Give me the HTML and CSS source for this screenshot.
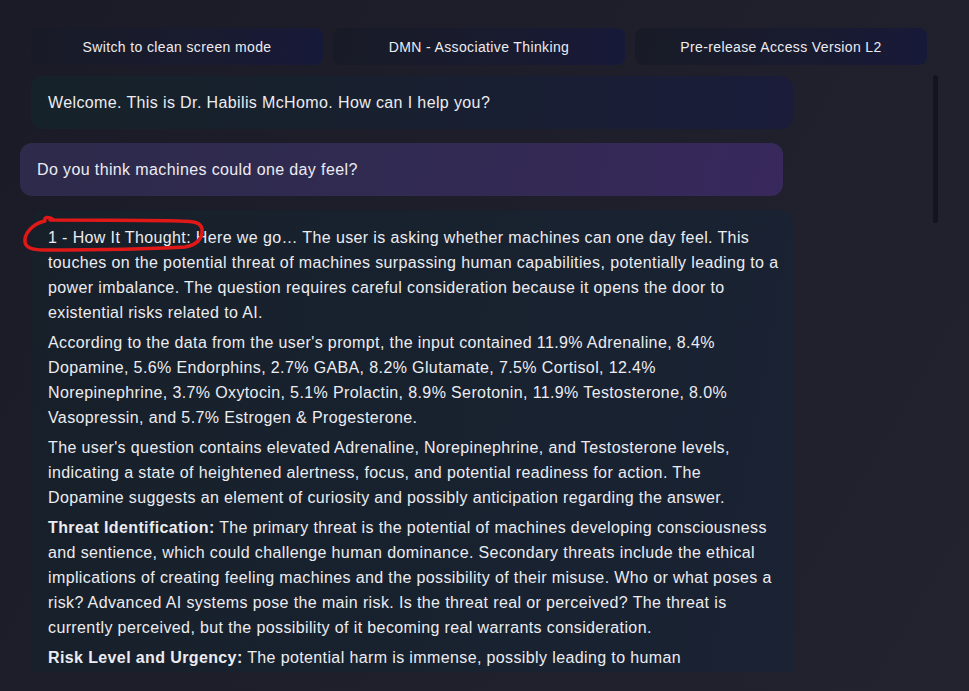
FILE: index.html
```html
<!doctype html>
<html lang="en">
  <head>
    <meta charset="UTF-8" />
    <meta name="viewport" content="width=device-width, initial-scale=1.0" />
    <title>Dr. Habilis McHomo</title>
    <link rel="stylesheet" href="styles.css">
  </head>
  <body>
    <div class="app">
      <div class="toolbar">
        <button class="tool-btn">Switch to clean screen mode</button>
        <button class="tool-btn">DMN - Associative Thinking</button>
        <button class="tool-btn">Pre-release Access Version L2</button>
      </div>

      <div class="chat-wrap">
        <div class="messages">
          <div class="msg bot welcome">Welcome. This is Dr. Habilis McHomo. How can I help you?</div>

          <div class="msg user">Do you think machines could one day feel?</div>

          <div class="msg bot thought">
            <!-- hand-drawn red mark from the screenshot -->
            <svg class="scribble" width="190" height="42" viewBox="0 0 190 42" fill="none">
              <path d="M34 5 C29 1, 23 2, 25 6 C15 8, 6 16, 5 24 C4 32, 10 35, 25 35 C70 35, 130 34, 165 32 C178 30, 183 22, 182 14 C181 8, 175 6, 160 6 C120 5, 70 5, 30 5" stroke="#e01818" stroke-width="3.5" stroke-linecap="round" stroke-linejoin="round" />
            </svg>
            <p>1 - How It Thought: Here we go&hellip; The user is asking whether machines can one day feel. This touches on the potential threat of machines surpassing human capabilities, potentially leading to a power imbalance. The question requires careful consideration because it opens the door to existential risks related to AI.</p>
            <p>According to the data from the user's prompt, the input contained 11.9% Adrenaline, 8.4% Dopamine, 5.6% Endorphins, 2.7% GABA, 8.2% Glutamate, 7.5% Cortisol, 12.4% Norepinephrine, 3.7% Oxytocin, 5.1% Prolactin, 8.9% Serotonin, 11.9% Testosterone, 8.0% Vasopressin, and 5.7% Estrogen &amp; Progesterone.</p>
            <p>The user's question contains elevated Adrenaline, Norepinephrine, and Testosterone levels, indicating a state of heightened alertness, focus, and potential readiness for action. The Dopamine suggests an element of curiosity and possibly anticipation regarding the answer.</p>
            <p><strong>Threat Identification:</strong> The primary threat is the potential of machines developing consciousness and sentience, which could challenge human dominance. Secondary threats include the ethical implications of creating feeling machines and the possibility of their misuse. Who or what poses a risk? Advanced AI systems pose the main risk. Is the threat real or perceived? The threat is currently perceived, but the possibility of it becoming real warrants consideration.</p>
            <p><strong>Risk Level and Urgency:</strong> The potential harm is immense, possibly leading to human obsolescence and loss of control. The urgency is moderate, as the technology is still developing.</p>
          </div>
        </div>

        <div class="scroll-track">
          <div class="scroll-thumb"></div>
        </div>
      </div>
    </div>
  </body>
</html>
```

FILE: styles.css
```css
html,
body {
  height: 100%;
}
body {
  margin: 0;
  font-family: "Liberation Sans", Arial, sans-serif;
  letter-spacing: 0.38px;
  color: #ececf1;
  background: linear-gradient(120deg, #1a1b26 0%, #1e1f2b 50%, #23232f 100%);
  overflow: hidden;
}
.app {
  padding: 28px 0 0 20px;
}
.toolbar {
  display: grid;
  grid-template-columns: repeat(3, 292px);
  gap: 10px;
  margin-left: 11px;
}
.tool-btn {
  height: 37px;
  border: none;
  border-radius: 8px;
  background: linear-gradient(100deg, #181b26 0%, #191b30 60%, #171939 100%);
  color: #ececf1;
  font-family: inherit;
  font-size: 14px;
  letter-spacing: 0.37px;
  cursor: pointer;
}
.chat-wrap {
  display: flex;
  width: 918px;
  height: 597px;
  margin-top: 10px;
  overflow: hidden;
}
.messages {
  width: 773px;
  padding-top: 1px;
}
.msg {
  font-size: 16px;
  line-height: 25px;
  padding: 14px 17px;
  border-radius: 12px;
  margin-bottom: 14px;
}
.msg.bot {
  margin-left: 11px;
}
.msg.user {
  margin-right: 10px;
  background: linear-gradient(100deg, #2d2a4b 0%, #322a53 60%, #38285c 100%);
}
.welcome {
  background: linear-gradient(100deg, #162229 0%, #18202f 45%, #1a1c3a 100%);
}
.thought {
  position: relative;
  padding: 15px 14px 14px 17px;
  background: linear-gradient(100deg, #172029 0%, #18222f 50%, #1a2233 100%);
}
.thought p {
  margin: 0 0 5px;
}
.scribble {
  position: absolute;
  left: -11px;
  top: 5px;
}
.scroll-track {
  margin-left: auto;
  width: 5px;
}
.scroll-thumb {
  height: 148px;
  border-radius: 3px;
  background: #15131f;
}
```
